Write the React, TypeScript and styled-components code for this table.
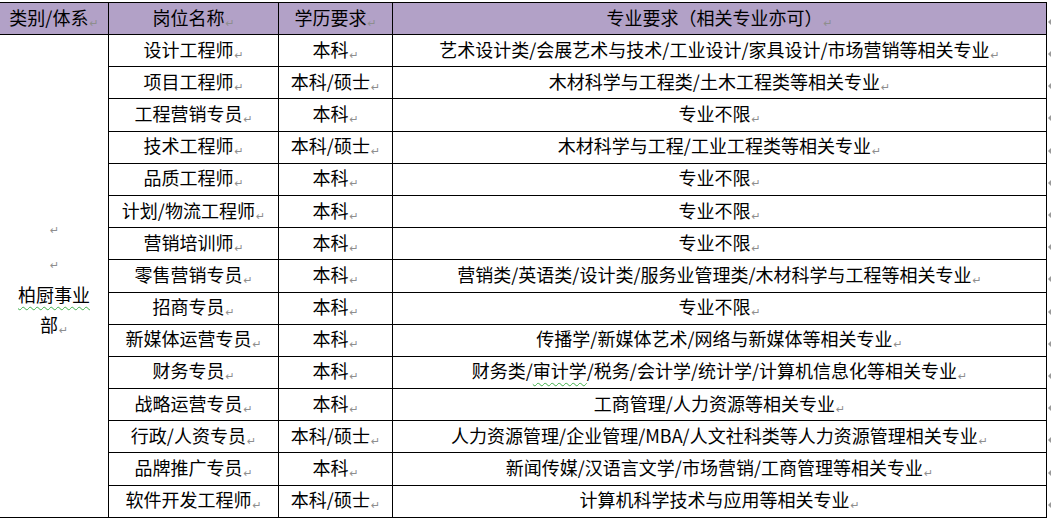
import React from "react";
import styled, { createGlobalStyle } from "styled-components";

const GlobalStyle = createGlobalStyle`
  html, body {
    margin: 0;
    padding: 0;
    background: #ffffff;
    overflow: hidden;
  }
  body {
    font-family: "Noto Sans CJK SC", "Noto Sans", sans-serif;
    color: #000000;
  }
`;

const Page = styled.div`
  width: 1052px;
  height: 518px;
  padding-top: 2px;
  box-sizing: border-box;
  overflow: hidden;
`;

const Grid = styled.div`
  display: grid;
  grid-template-columns: 110px 170px 114px 654px 5px;
  grid-template-rows: 33px repeat(15, 32.2px);
  margin-left: -1px;
  width: max-content;
`;

const Cell = styled.div<{ $head?: boolean; $first?: boolean }>`
  box-sizing: border-box;
  display: flex;
  align-items: center;
  justify-content: center;
  padding-top: 1px;
  border-right: 1px solid #000;
  border-bottom: 1px solid #000;
  border-top: ${(p) => (p.$head ? "1px solid #000" : "none")};
  border-left: ${(p) => (p.$first ? "1px solid #000" : "none")};
  background: ${(p) => (p.$head ? "#b2a1c7" : "#ffffff")};
  font-size: 18px;
  white-space: nowrap;
`;

const Merged = styled(Cell)`
  grid-column: 1;
  grid-row: 2 / span 15;
  flex-direction: column;
  white-space: normal;
`;

const Para = styled.span<{ $width?: number }>`
  display: block;
  line-height: 30px;
  text-align: center;
  max-width: ${(p) => (p.$width ? `${p.$width}px` : "none")};
`;

const Mark = styled.span`
  font-family: "DejaVu Sans", sans-serif;
  font-size: 11px;
  color: #8e8e8e;
  margin-left: 1px;
  position: relative;
  top: 2px;
`;

const Wavy = styled.span`
  text-decoration: underline wavy #3fae49;
  text-decoration-thickness: 1px;
  text-underline-offset: 4px;
`;

const EndCell = styled.div`
  display: flex;
  align-items: center;
  padding-top: 6px;
  box-sizing: border-box;
  padding-left: 1px;
`;

const EndMark = styled.span`
  width: 0;
  height: 0;
  border-top: 3px solid transparent;
  border-bottom: 3px solid transparent;
  border-right: 3px solid #9a9a9a;
`;

type Row = { job: string; degree: string; major: React.ReactNode };

const rows: Row[] = [
  { job: "设计工程师", degree: "本科", major: "艺术设计类/会展艺术与技术/工业设计/家具设计/市场营销等相关专业" },
  { job: "项目工程师", degree: "本科/硕士", major: "木材科学与工程类/土木工程类等相关专业" },
  { job: "工程营销专员", degree: "本科", major: "专业不限" },
  { job: "技术工程师", degree: "本科/硕士", major: "木材科学与工程/工业工程类等相关专业" },
  { job: "品质工程师", degree: "本科", major: "专业不限" },
  { job: "计划/物流工程师", degree: "本科", major: "专业不限" },
  { job: "营销培训师", degree: "本科", major: "专业不限" },
  { job: "零售营销专员", degree: "本科", major: "营销类/英语类/设计类/服务业管理类/木材科学与工程等相关专业" },
  { job: "招商专员", degree: "本科", major: "专业不限" },
  { job: "新媒体运营专员", degree: "本科", major: "传播学/新媒体艺术/网络与新媒体等相关专业" },
  {
    job: "财务专员",
    degree: "本科",
    major: (
      <>
        财务类/<Wavy>审计学</Wavy>/税务/会计学/统计学/计算机信息化等相关专业
      </>
    ),
  },
  { job: "战略运营专员", degree: "本科", major: "工商管理/人力资源等相关专业" },
  { job: "行政/人资专员", degree: "本科/硕士", major: "人力资源管理/企业管理/MBA/人文社科类等人力资源管理相关专业" },
  { job: "品牌推广专员", degree: "本科", major: "新闻传媒/汉语言文学/市场营销/工商管理等相关专业" },
  { job: "软件开发工程师", degree: "本科/硕士", major: "计算机科学技术与应用等相关专业" },
];

const headers = ["类别/体系", "岗位名称", "学历要求", "专业要求（相关专业亦可）"];

const Text: React.FC<{ children: React.ReactNode }> = ({ children }) => (
  <Para>
    {children}
    <Mark>↵</Mark>
  </Para>
);

const App: React.FC = () => {
  return (
    <Page>
      <GlobalStyle />
      <Grid>
        {headers.map((h, i) => (
          <Cell key={h} $head $first={i === 0}>
            <Text>{h}</Text>
          </Cell>
        ))}
        <EndCell>
          <EndMark />
        </EndCell>

        <Merged $first>
          <Para>
            <Mark>↵</Mark>
          </Para>
          <Para>
            <Mark>↵</Mark>
          </Para>
          <Para $width={80}>
            <Wavy>柏厨事业</Wavy>部<Mark>↵</Mark>
          </Para>
        </Merged>

        {rows.map((r) => (
          <React.Fragment key={r.job}>
            <Cell style={{ gridColumn: 2 }}>
              <Text>{r.job}</Text>
            </Cell>
            <Cell>
              <Text>{r.degree}</Text>
            </Cell>
            <Cell>
              <Text>{r.major}</Text>
            </Cell>
            <EndCell>
              <EndMark />
            </EndCell>
          </React.Fragment>
        ))}
      </Grid>
    </Page>
  );
};

export default App;
